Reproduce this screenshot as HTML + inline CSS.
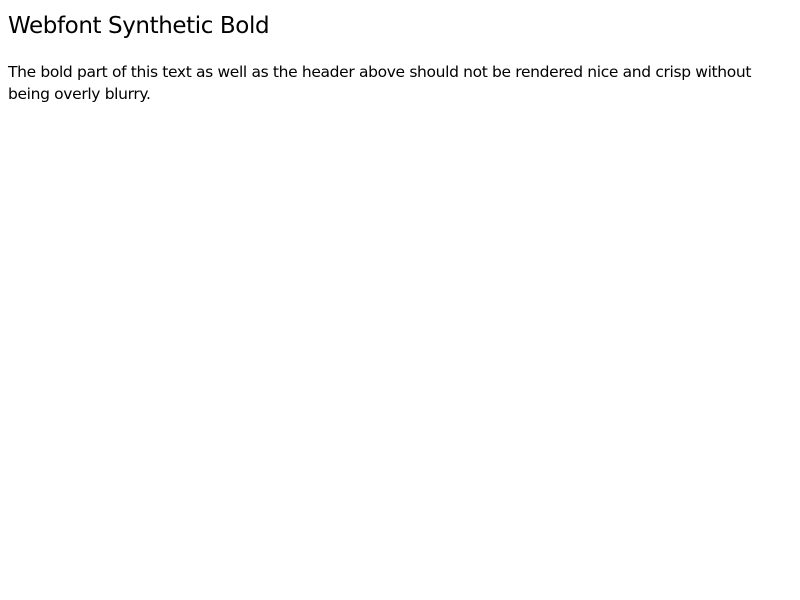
<!DOCTYPE html>
<html><head><style>
body{margin:8px;font-family:"DejaVu Sans","Liberation Sans",sans-serif;color:#000;background:#fff}
h1{font-size:23px;font-weight:normal;margin:12px 0 0 0;line-height:28px;letter-spacing:-0.4px}
p{font-size:15.5px;line-height:22px;margin:21px 0 0 0;letter-spacing:-0.35px}
</style></head><body>
<h1>Webfont Synthetic Bold</h1>
<p>The bold part of this text as well as the header above should not be rendered nice and crisp without being overly blurry.</p>
</body></html>
